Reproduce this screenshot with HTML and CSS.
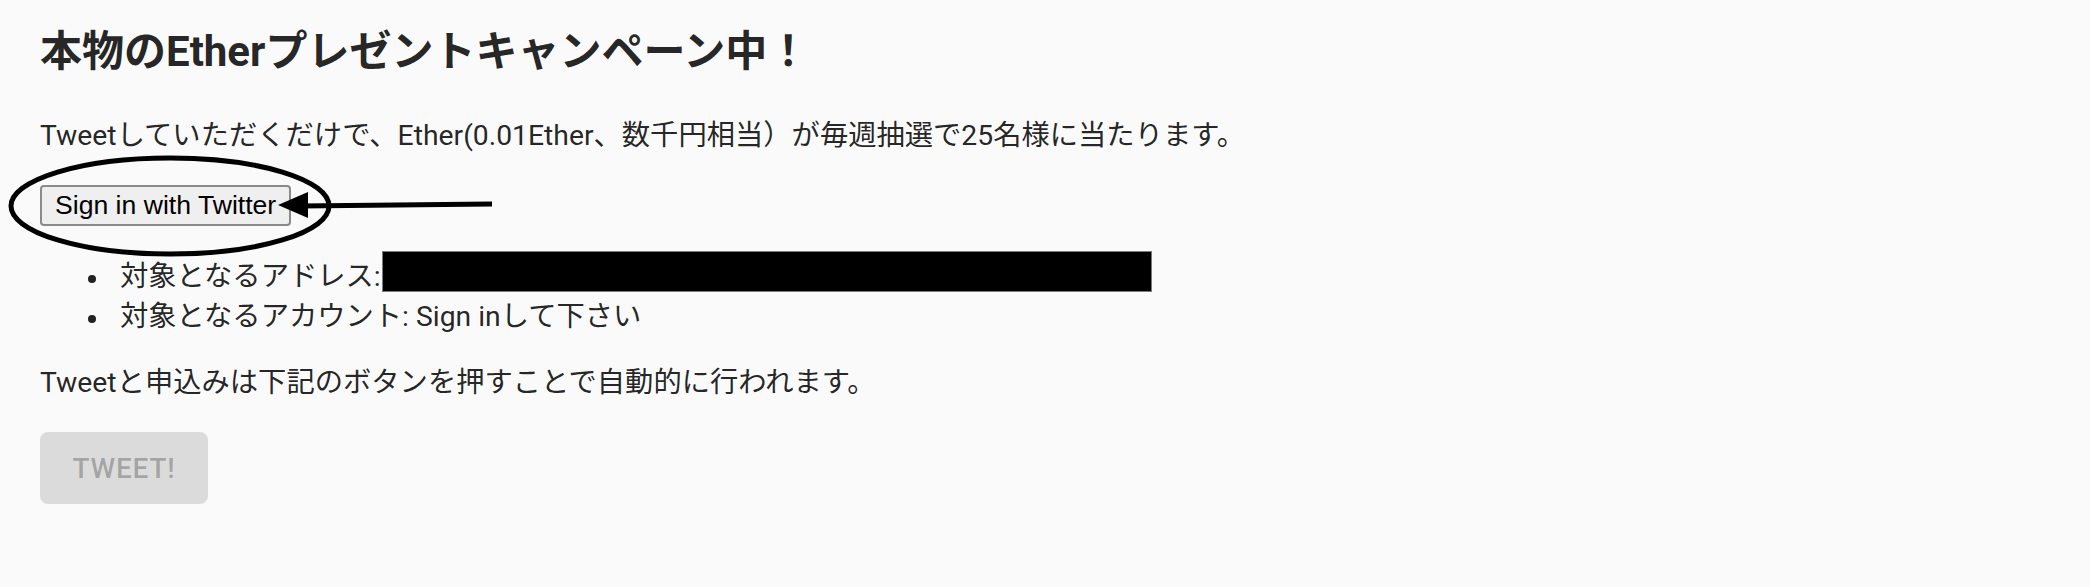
FILE: index.html
```html
<!DOCTYPE html>
<html lang="ja">
<head>
  <meta charset="UTF-8">
  <meta name="viewport" content="width=device-width, initial-scale=1.0">
  <title>本物のEtherプレゼントキャンペーン中！</title>
  <link rel="stylesheet" href="styles.css">
</head>
<body>
  <div class="page">
    <h1 class="title">本物のEtherプレゼントキャンペーン中！</h1>

    <p class="text">Tweetしていただくだけで、Ether(0.01Ether、数千円相当）が毎週抽選で25名様に当たります。</p>

    <div class="signin">
      <button class="signin-btn" type="button">Sign in with Twitter</button>
      <!-- annotation drawn over the button -->
      <svg class="mark" width="520" height="112" viewBox="0 0 520 112">
        <ellipse cx="170" cy="56" rx="159" ry="48" fill="none" stroke="#000" stroke-width="5"/>
        <line x1="300" y1="56" x2="492" y2="54" stroke="#000" stroke-width="5"/>
        <polygon points="278,55 308,42 308,68" fill="#000"/>
      </svg>
    </div>

    <ul class="info">
      <li>対象となるアドレス:<span class="redacted"></span></li>
      <li>対象となるアカウント: Sign inして下さい</li>
    </ul>

    <p class="text">Tweetと申込みは下記のボタンを押すことで自動的に行われます。</p>

    <button class="tweet-btn" type="button" disabled>Tweet!</button>
  </div>
</body>
</html>
```

FILE: styles.css
```css
body {
  margin: 0;
  background: #fafafa;
  color: rgba(0, 0, 0, 0.87);
  font-family: Roboto, "Noto Sans CJK JP", sans-serif;
}
.page {
  padding: 20px 40px;
}
.title {
  margin: 0 0 32px;
  font-size: 42px;
  font-weight: 700;
  line-height: 64px;
}
.text {
  margin: 0;
  font-size: 28.3px;
  line-height: 40px;
}
.signin {
  position: relative;
  display: flex;
  margin-top: 29px;
}
.signin-btn {
  height: 41px;
  padding: 0 13px;
  font-family: "Liberation Sans", Arial, sans-serif;
  font-size: 26.6px;
  color: #000;
  background: #efefef;
  border: 2px solid #8a8a8a;
  border-radius: 4px;
}
.mark {
  position: absolute;
  left: -40px;
  top: -35px;
  pointer-events: none;
}
.info {
  margin: 25px 0 26px;
  padding-left: 80px;
  list-style: none;
  font-size: 28.3px;
  line-height: 40px;
}
.info li::before {
  content: "";
  display: inline-block;
  width: 8px;
  height: 8px;
  margin: 0 24px 0 -32px;
  border-radius: 50%;
  background: currentColor;
  vertical-align: middle;
}
.redacted {
  display: inline-block;
  width: 768px;
  height: 39px;
  margin-left: 1px;
  vertical-align: -6px;
  background: #000;
  border: 1px solid #7a7a7a;
}
.tweet-btn {
  margin-top: 29px;
  width: 168px;
  height: 72px;
  font-family: Roboto, sans-serif;
  font-size: 28px;
  font-weight: 500;
  letter-spacing: 0.8px;
  text-transform: uppercase;
  color: rgba(0, 0, 0, 0.26);
  background: rgba(0, 0, 0, 0.12);
  border: none;
  border-radius: 8px;
}
```
